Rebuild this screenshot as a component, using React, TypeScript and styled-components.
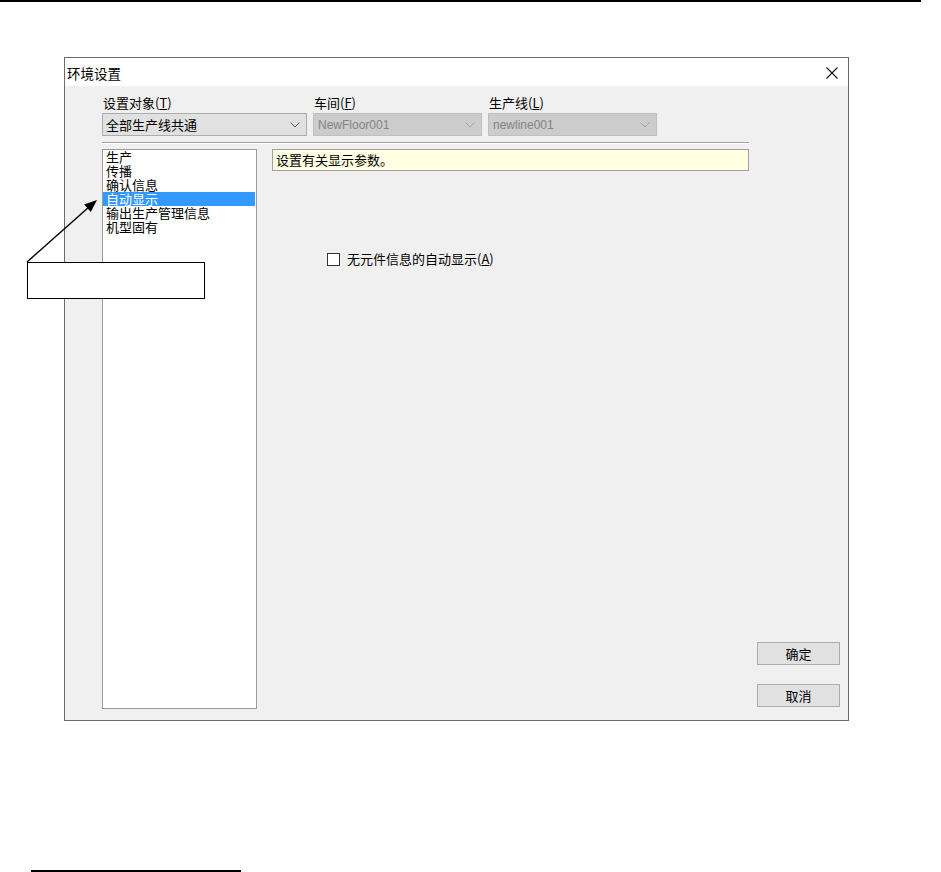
import styled, { createGlobalStyle } from 'styled-components';

const GlobalStyle = createGlobalStyle`
    html, body {
        margin: 0;
        padding: 0;
        background: #ffffff;
    }
    body {
        font-family: "Noto Sans CJK SC", "Liberation Sans", sans-serif;
        color: #000;
    }
`;

type ComboProps = { value: string; disabled?: boolean; width: number };

const fields: { label: string; key: string; value: string; disabled: boolean; width: number }[] = [
    { label: '设置对象(', key: 'T', value: '全部生产线共通', disabled: false, width: 205 },
    { label: '车间(', key: 'F', value: 'NewFloor001', disabled: true, width: 169 },
    { label: '生产线(', key: 'L', value: 'newline001', disabled: true, width: 169 },
];

const categories = ['生产', '传播', '确认信息', '自动显示', '输出生产管理信息', '机型固有'];

const Chevron = ({ color }: { color: string }) => (
    <svg width="10" height="6" viewBox="0 0 10 6">
        <polyline points="0.5,0.5 5,5 9.5,0.5" fill="none" stroke={color} strokeWidth="1" />
    </svg>
);

const ComboBox = ({ value, disabled, width }: ComboProps) => (
    <Combo $disabled={disabled} style={{ width }}>
        <ComboText $disabled={disabled}>{value}</ComboText>
        <Chevron color={disabled ? '#a6a6a6' : '#5a5a5a'} />
    </Combo>
);

const App = () => {
    return (
        <>
            <GlobalStyle />
            <Page>
                <TopRule />
                <Dialog>
                    <TitleBar>
                        <Title>环境设置</Title>
                        <svg width="12" height="12" viewBox="0 0 12 12" style={{ marginRight: 10 }}>
                            <path d="M0.5 0.5 L11.5 11.5 M11.5 0.5 L0.5 11.5" stroke="#111" strokeWidth="1.1" />
                        </svg>
                    </TitleBar>
                    <Body>
                        <LeftColumn>
                            <FieldRow>
                                {fields.map(f => (
                                    <Field key={f.key}>
                                        <Label>
                                            {f.label}<u>{f.key}</u>)
                                        </Label>
                                        <ComboBox value={f.value} disabled={f.disabled} width={f.width} />
                                    </Field>
                                ))}
                            </FieldRow>
                            <Separator />
                            <ContentRow>
                                <ListBox>
                                    {categories.map(c => (
                                        <ListItem key={c} $selected={c === '自动显示'}>{c}</ListItem>
                                    ))}
                                </ListBox>
                                <Pane>
                                    <Hint>设置有关显示参数。</Hint>
                                    <CheckRow>
                                        <CheckBox />
                                        <span>无元件信息的自动显示(<u>A</u>)</span>
                                    </CheckRow>
                                </Pane>
                            </ContentRow>
                        </LeftColumn>
                        <ButtonColumn>
                            <Button>确定</Button>
                            <Button>取消</Button>
                        </ButtonColumn>
                    </Body>
                </Dialog>
                <FootRule />

                <Callout />
                <ArrowLayer width="941" height="872" viewBox="0 0 941 872">
                    <line x1="27" y1="262" x2="89" y2="207" stroke="#000" strokeWidth="1.4" />
                    <polygon points="97,200 84.2,204.6 90.8,212" fill="#000" />
                </ArrowLayer>
            </Page>
        </>
    );
};

export default App;

// styled-components

const Page = styled.div`
    position: relative;
    width: 941px;
    height: 872px;
    overflow: hidden;
    background: #fff;
`;

const TopRule = styled.div`
    width: 921px;
    height: 2px;
    background: #000;
`;

const Dialog = styled.div`
    box-sizing: border-box;
    width: 785px;
    height: 664px;
    margin: 55px 0 0 64px;
    border: 1px solid #6a6a6a;
    background: #f0f0f0;
    display: flex;
    flex-direction: column;
`;

const TitleBar = styled.div`
    height: 28px;
    background: #ffffff;
    display: flex;
    align-items: center;
    justify-content: space-between;
    padding: 1px 0 0 2px;
    box-sizing: border-box;
`;

const Title = styled.span`
    font-size: 13.5px;
    line-height: 16px;
`;

const Body = styled.div`
    flex: 1;
    display: flex;
    gap: 8px;
    padding: 9px 8px 10px 37px;
`;

const LeftColumn = styled.div`
    width: 647px;
    display: flex;
    flex-direction: column;
`;

const FieldRow = styled.div`
    display: flex;
    gap: 6px;
`;

const Field = styled.div`
    display: flex;
    flex-direction: column;
    gap: 2px;
`;

const Label = styled.div`
    font-size: 13px;
    line-height: 16px;
    padding-left: 1px;
`;

const Combo = styled.div<{ $disabled?: boolean }>`
    box-sizing: border-box;
    height: 23px;
    display: flex;
    align-items: center;
    justify-content: space-between;
    padding: 0 6px 0 3px;
    background: ${p => (p.$disabled ? '#cccccc' : '#e1e1e1')};
    border: 1px solid ${p => (p.$disabled ? '#bfbfbf' : '#adadad')};
`;

const ComboText = styled.span<{ $disabled?: boolean }>`
    font-size: 13px;
    line-height: 16px;
    color: ${p => (p.$disabled ? '#838383' : '#000')};
    font-family: ${p => (p.$disabled ? '"Liberation Sans", sans-serif' : '"Noto Sans CJK SC", sans-serif')};
    ${p => (p.$disabled ? 'font-size: 12px; padding-left: 1px;' : '')}
`;

const Separator = styled.div`
    margin: 6px 0 5px;
    border-top: 1px solid #a0a0a0;
    border-bottom: 1px solid #ffffff;
`;

const ContentRow = styled.div`
    display: flex;
    gap: 15px;
`;

const ListBox = styled.div`
    box-sizing: border-box;
    width: 155px;
    height: 560px;
    background: #fff;
    border: 1px solid #9a9a9a;
    display: flex;
    flex-direction: column;
`;

const ListItem = styled.div<{ $selected?: boolean }>`
    height: 14px;
    font-size: 13px;
    line-height: 14px;
    padding-left: 3px;
    white-space: nowrap;
    color: ${p => (p.$selected ? '#fff' : '#000')};
    background: ${p => (p.$selected ? '#3399ff' : 'transparent')};
    margin-right: 1px;
`;

const Pane = styled.div`
    flex: 1;
    display: flex;
    flex-direction: column;
`;

const Hint = styled.div`
    box-sizing: border-box;
    height: 22px;
    background: #ffffe1;
    border: 1px solid #a0a0a0;
    font-size: 13px;
    line-height: 19px;
    padding-left: 3px;
`;

const CheckRow = styled.div`
    display: flex;
    align-items: center;
    gap: 7px;
    margin: 80px 0 0 55px;
    font-size: 13px;
    line-height: 16px;
`;

const CheckBox = styled.span`
    box-sizing: border-box;
    width: 13px;
    height: 13px;
    background: #fff;
    border: 1px solid #333;
`;

const ButtonColumn = styled.div`
    display: flex;
    flex-direction: column;
    justify-content: flex-end;
    gap: 19px;
    padding-bottom: 3px;
`;

const Button = styled.div`
    box-sizing: border-box;
    width: 83px;
    height: 23px;
    background: #e1e1e1;
    border: 1px solid #adadad;
    display: flex;
    align-items: center;
    justify-content: center;
    font-size: 13px;
`;

const FootRule = styled.div`
    width: 210px;
    height: 2px;
    margin: 149px 0 0 31px;
    background: #000;
`;

const Callout = styled.div`
    position: absolute;
    left: 27px;
    top: 262px;
    width: 178px;
    height: 37px;
    box-sizing: border-box;
    background: #fff;
    border: 1px solid #000;
`;

const ArrowLayer = styled.svg`
    position: absolute;
    left: 0;
    top: 0;
    pointer-events: none;
`;
